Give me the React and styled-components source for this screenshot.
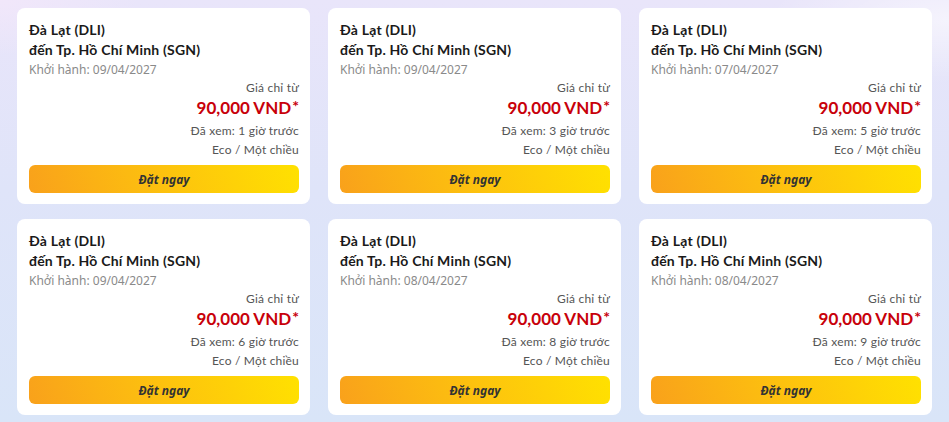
import React from "react";
import styled, { createGlobalStyle } from "styled-components";

const GlobalStyle = createGlobalStyle`
  html, body {
    margin: 0;
    padding: 0;
  }
  body {
    font-family: "Noto Sans", "Open Sans", sans-serif;
    background: linear-gradient(180deg, #e9e5fa 0%, #dfe4f9 45%, #d9e5f8 100%);
    min-height: 422px;
  }
`;

const Page = styled.div`
  padding: 8px 17px 8px 17px;
  min-height: 422px;
  box-sizing: border-box;
  background:
    radial-gradient(ellipse 260px 90px at 950px 20px, rgba(255, 255, 255, 0.55), transparent 70%),
    radial-gradient(ellipse 200px 80px at 0px 0px, rgba(245, 232, 250, 0.7), transparent 70%);
`;

const Grid = styled.div`
  display: grid;
  grid-template-columns: repeat(3, 293px);
  column-gap: 18px;
  row-gap: 15px;
`;

const Card = styled.div`
  background: #fff;
  border-radius: 8px;
  padding: 12px 11px 11px 12px;
  display: flex;
  flex-direction: column;
`;

const Title = styled.div`
  font-family: Lato, "Noto Sans", sans-serif;
  font-size: 14px;
  font-weight: 700;
  line-height: 20px;
  letter-spacing: 0.2px;
  color: #1a1a1a;
`;

const Depart = styled.div`
  margin-top: 1px;
  font-size: 12px;
  line-height: 18px;
  color: #8a8a8a;
`;

const PriceBox = styled.div`
  display: flex;
  flex-direction: column;
  align-items: flex-end;
`;

const Small = styled.div`
  font-family: Lato, "Noto Sans", sans-serif;
  font-size: 12px;
  line-height: ${(p) => p.$lh || "18px"};
  letter-spacing: 0.2px;
  color: #555;
`;

const Price = styled.div`
  font-family: Lato, "Noto Sans", sans-serif;
  font-size: 17px;
  font-weight: 700;
  line-height: 22px;
  color: #c8000a;
  margin-bottom: 2px;
  sup {
    font-size: 16px;
    vertical-align: top;
    line-height: 17px;
    margin-left: 1px;
  }
`;

const BookButton = styled.button`
  margin-top: 6px;
  height: 28px;
  width: 100%;
  border: none;
  border-radius: 6px;
  background: linear-gradient(70deg, #f9a11b 0%, #fdc20e 50%, #ffe100 100%);
  font-family: "Noto Sans", "Open Sans", sans-serif;
  font-size: 12px;
  font-weight: 700;
  font-style: italic;
  color: #333;
  cursor: pointer;
`;

const flights = [
  { date: "09/04/2027", seen: 1 },
  { date: "09/04/2027", seen: 3 },
  { date: "07/04/2027", seen: 5 },
  { date: "09/04/2027", seen: 6 },
  { date: "08/04/2027", seen: 8 },
  { date: "08/04/2027", seen: 9 },
];

const App = () => (
  <>
    <GlobalStyle />
    <Page>
      <Grid>
        {flights.map((f, i) => (
          <Card key={i}>
            <Title>Đà Lạt (DLI)</Title>
            <Title>đến Tp. Hồ Chí Minh (SGN)</Title>
            <Depart>Khởi hành: {f.date}</Depart>
            <PriceBox>
              <Small>Giá chỉ từ</Small>
              <Price>
                90,000 VND<sup>*</sup>
              </Price>
              <Small $lh="19px">Đã xem: {f.seen} giờ trước</Small>
              <Small $lh="19px">Eco / Một chiều</Small>
            </PriceBox>
            <BookButton>Đặt ngay</BookButton>
          </Card>
        ))}
      </Grid>
    </Page>
  </>
);

export default App;
